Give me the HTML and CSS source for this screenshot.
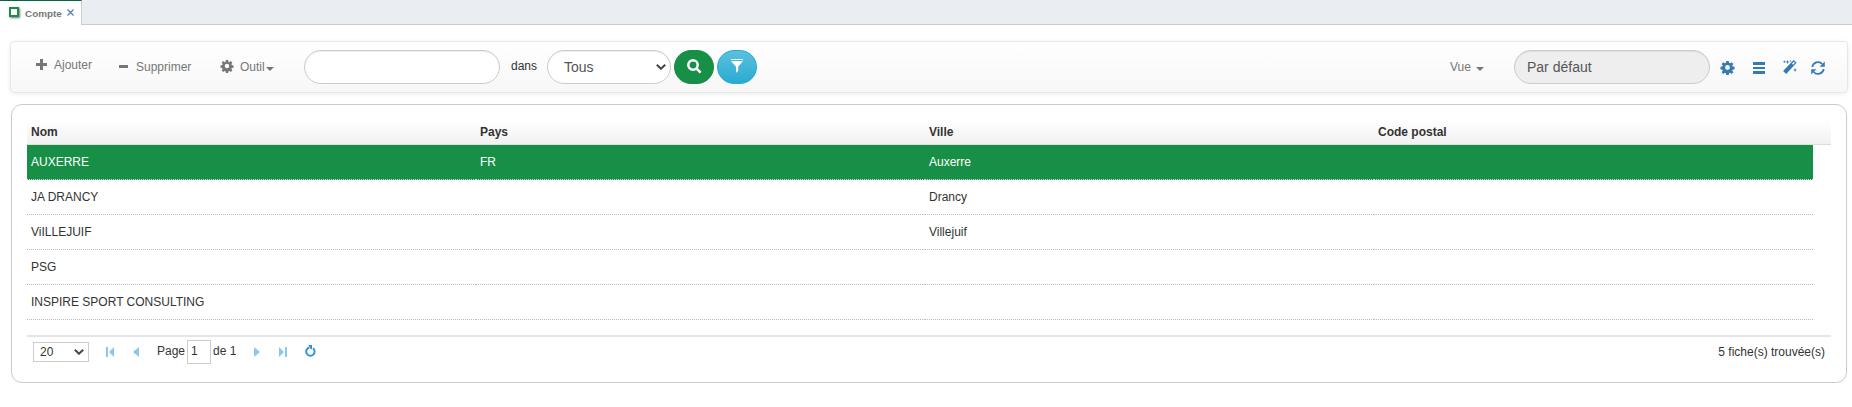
FILE: index.html
```html
<!DOCTYPE html>
<html lang="fr">
<head>
<meta charset="utf-8">
<title>Compte</title>
<link rel="stylesheet" href="styles.css">
</head>
<body>
<svg class="sprite" width="0" height="0">
  <symbol id="cog" viewBox="0 0 14 14"><path fill-rule="evenodd" d="M5.700 0h2.600l.4 2 1.100.5 1.700-1.200 1.800 1.800-1.200 1.700.5 1.100 2 .4v2.600l-2 .4-.5 1.100 1.200 1.700-1.800 1.800-1.700-1.200-1.100.5-.4 2H5.700l-.4-2-1.100-.5-1.700 1.200L.7 12.100l1.200-1.700-.5-1.100-2-.4V6.300l2-.4.5-1.100L.7 3.100l1.800-1.800 1.700 1.200 1.100-.5zM7 4.400a2.600 2.600 0 1 0 0 5.200 2.600 2.600 0 0 0 0-5.200z"/></symbol>
</svg>
<nav class="tabs">
  <div class="tab">
    <span class="tab-icon"></span>
    <span class="tab-label">Compte</span>
    <svg class="tab-close" width="7" height="7" viewBox="0 0 7 7"><path d="M.5.5l6 6M6.500.5l-6 6"/></svg>
  </div>
  <div class="tabs-rest"></div>
</nav>

<header class="toolbar">
  <a class="action action-add">
    <svg width="11" height="11" viewBox="0 0 11 11"><path d="M4 0h3v4h4v3H7v4H4V7H0V4h4z"/></svg>
    <span>Ajouter</span>
  </a>
  <a class="action action-del">
    <svg width="9" height="11" viewBox="0 0 9 11"><path d="M0 4h9v3H0z"/></svg>
    <span>Supprimer</span>
  </a>
  <a class="action action-tool">
    <svg width="12" height="12"><use href="#cog"/></svg>
    <span>Outil</span><i class="caret"></i>
  </a>
  <div class="pill search-input"></div>
  <span class="in-label">dans</span>
  <div class="pill scope"><span>Tous</span>
    <svg width="10" height="6" viewBox="0 0 10 6"><path d="M.8.8L5 4.700 9.200.8"/></svg>
  </div>
  <button class="btn btn-search"><svg width="15" height="15" viewBox="0 0 15 15"><circle cx="6" cy="6" r="4.700"/><path d="M9.600 9.600l4 4"/></svg></button>
  <button class="btn btn-filter"><svg width="12" height="14" viewBox="0 0 12 14"><path d="M0 0h12v1H0zM0 2h12L7.200 7.800V12L5 13.800V7.800z"/></svg></button>
  <a class="action action-view"><span>Vue</span><i class="caret"></i></a>
  <div class="pill view-name">Par défaut</div>
  <div class="links">
    <svg class="l-cog" width="13" height="13"><use href="#cog"/></svg>
    <svg class="l-bars" width="12" height="12" viewBox="0 0 12 12"><path d="M0 0h12v3H0zM0 5h12v2H0zM0 9h12v3H0z"/></svg>
    <svg class="l-magic" width="14" height="14" viewBox="0 0 14 14"><path d="M10.600 0l3 2.800L3.200 14 .1 11.100z"/><path class="hole" d="M9 3.700l1.100 1 1.800-1.900-1.100-1z"/><path d="M4.500 0l.6 1.400 1.500.6-1.500.6-.6 1.500-.6-1.500L2.500 2l1.400-.6zM1.300.3l.5 1 1 .5-1 .4-.5 1-.4-1-.9-.4.900-.5zM12.100 8l.6 1.400 1.300.6-1.300.6-.6 1.400-.6-1.400-1.400-.6 1.400-.6zM7.600 0l.4.700.7.300-.7.400-.4.700-.3-.7-.7-.4.700-.3z"/></svg>
    <svg class="l-sync" width="14" height="14" viewBox="0 0 14 14"><path class="arc" d="M1.200 6A5.900 5.900 0 0 1 11.300 3M12.800 8A5.900 5.900 0 0 1 2.700 11"/><path d="M13.800.5v5.200H8.600zM.2 13.500V8.300h5.200z"/></svg>
  </div>
</header>

<main class="panel">
  <div class="row head"><span>Nom</span><span>Pays</span><span>Ville</span><span>Code postal</span></div>
  <div class="rows">
    <div class="row selected"><span>AUXERRE</span><span>FR</span><span>Auxerre</span><span></span></div>
    <div class="row"><span>JA DRANCY</span><span></span><span>Drancy</span><span></span></div>
    <div class="row"><span>ViILLEJUIF</span><span></span><span>Villejuif</span><span></span></div>
    <div class="row"><span>PSG</span><span></span><span></span><span></span></div>
    <div class="row"><span>INSPIRE SPORT CONSULTING</span><span></span><span></span><span></span></div>
  </div>
  <footer class="pager">
    <div class="size"><span>20</span><svg width="10" height="6" viewBox="0 0 10 6"><path d="M.8.8L5 4.700 9.200.8"/></svg></div>
    <svg class="first" width="8" height="10" viewBox="0 0 8 10"><path d="M0 0h2v10H0zM8 0v10L3 5z"/></svg>
    <svg class="prev" width="6" height="10" viewBox="0 0 6 10"><path d="M6 0v10L0 5z"/></svg>
    <span class="page">Page</span>
    <div class="num">1</div>
    <span class="of">de 1</span>
    <svg class="next" width="6" height="10" viewBox="0 0 6 10"><path d="M0 0v10l6-5z"/></svg>
    <svg class="last" width="8" height="10" viewBox="0 0 8 10"><path d="M6 0h2v10H6zM0 0v10l5-5z"/></svg>
    <svg class="reload" width="11" height="12" viewBox="0 0 11 12"><path class="arc" d="M8 3.300A4.200 4.200 0 1 1 4.500 2.500"/><path d="M3.400 0H7v4.600L5.400 3.400z"/></svg>
    <span class="count">5 fiche(s) trouvée(s)</span>
  </footer>
</main>
</body>
</html>
```
FILE: styles.css
```css
* { box-sizing: border-box; }
body {
  margin: 0;
  background: #fff;
  color: #333;
  font: 12px/14px "Liberation Sans", Arial, sans-serif;
}
svg { display: block; flex: none; }
.sprite { position: absolute; }
symbol { overflow: visible; }

/* tab strip */
.tabs { display: flex; height: 25px; }
.tab {
  display: flex;
  width: 82px;
  padding: 6px 0 0 9px;
  border-top: 1px solid #00693e;
  border-right: 1px solid #ccc;
}
.tab-icon {
  width: 10px;
  height: 10px;
  border: 2px solid #178f46;
  background: #fff;
  box-shadow: 1px 1px 2px #777;
}
.tab-label {
  width: 42px;
  margin-left: 6px;
  color: #777;
  font-size: 9.900px;
  font-weight: bold;
  line-height: 13px;
}
.tab-close { margin-top: 2px; fill: none; stroke: #5580bd; stroke-width: 1.300; }
.tabs-rest { flex: 1; background: #eaeef3; border-bottom: 1px solid #ccc; }

/* toolbar */
.toolbar {
  display: flex;
  align-items: flex-start;
  height: 52px;
  margin: 16px 4px 0 10px;
  padding: 8px 22px 0 25px;
  border: 1px solid #e7e7e7;
  border-radius: 4px;
  background: linear-gradient(#fff, #f7f7f7);
  box-shadow: 0 1px 5px rgba(0, 0, 0, .075);
}
.action { display: flex; color: #777; fill: #777; white-space: nowrap; }
.action-add { width: 83px; margin-top: 8px; }
.action-add svg { margin-top: 1px; }
.action-add span { margin-left: 7px; }
.action-del { width: 102px; margin-top: 10px; }
.action-del svg { margin-top: 1px; }
.action-del span { margin-left: 8px; }
.action-tool { width: 83px; margin-top: 10px; }
.action-tool span { width: 26px; margin-left: 7px; }
.caret {
  width: 8px;
  height: 4px;
  margin-top: 7px;
  border: 4px solid transparent;
  border-top-color: #777;
  border-bottom: 0;
}
.pill {
  height: 34px;
  border: 1px solid #ccc;
  border-radius: 17px;
  background: #fff;
  box-shadow: inset 0 1px 1px rgba(0, 0, 0, .075);
  color: #555;
  font-size: 14px;
  line-height: 32px;
}
.search-input { width: 196px; }
.in-label { width: 36px; margin: 9px 0 0 11px; }
.scope {
  display: flex;
  align-items: center;
  justify-content: space-between;
  width: 124px;
  padding: 0 4px 0 16px;
}
.scope svg, .size svg { fill: none; stroke: #444; stroke-width: 2; }
.btn {
  display: flex;
  justify-content: center;
  width: 40px;
  height: 34px;
  margin: 0 0 0 3px;
  padding: 8px 0 0;
  border: 1px solid #178f46;
  border-radius: 17px;
  background: #178f46;
}
.btn-search svg { fill: none; stroke: #fff; stroke-width: 2.500; }
.btn-filter {
  border-color: #2aabd2;
  background: linear-gradient(#5bc0de, #2aabd2);
  fill: #fff;
}
.action-view { margin: 10px 30px 0 auto; }
.action-view span { width: 26px; }
.view-name { width: 196px; padding-left: 12px; background: #eee; }
.links { display: flex; width: 115px; padding: 10px 0 0 11px; fill: #337ab7; }
.l-cog { margin-top: 1px; }
.l-bars { margin: 2px 0 0 19px; }
.l-magic { margin-left: 18px; }
.l-sync { margin: 1px 0 0 14px; }
.arc { fill: none; stroke: #337ab7; stroke-width: 1.700; }
.hole { fill: #fff; }

/* icons drawn from the shared gear symbol */
.action-tool svg, .l-cog { overflow: visible; }

/* record list */
.panel {
  height: 279px;
  margin: 11px 5px 0 11px;
  padding: 15px 15px 0;
  border: 1px solid #ccc;
  border-radius: 11px;
  box-shadow: 0 2px 2px rgba(0, 0, 0, .03);
}
.row { display: grid; grid-template-columns: repeat(3, 449px) 1fr; }
.row span { padding: 10px 4px 0; border-bottom: 1px dotted #bbb; }
.rows { margin-right: 18px; }
.rows .row { height: 35px; }
.head {
  height: 25px;
  background: linear-gradient(#fff, #f1f1f1);
  border-bottom: 1px solid #ddd;
  font-weight: bold;
}
.row.head span { padding-top: 5px; border: 0; }
.selected { background: #178f46; color: #fff; }
.row.selected span { border-bottom-color: #ddd; }

/* pager */
.pager {
  display: flex;
  align-items: flex-start;
  margin-top: 15px;
  padding: 3px 6px 0;
  border-top: 2px solid #e5e5e5;
  fill: #8ac7f3;
}
.size {
  display: flex;
  align-items: center;
  justify-content: space-between;
  width: 56px;
  height: 20px;
  margin-top: 2px;
  padding: 0 4px 0 6px;
  border: 1px solid #ccc;
}
.pager > svg { margin-top: 7px; }
.pager > .first { margin-left: 17px; }
.pager > .prev { margin-left: 19px; }
.page { width: 30px; margin: 4px 0 0 18px; }
.num { width: 24px; height: 24px; padding: 3px; border: 1px solid #ccc; }
.of { width: 25px; margin: 4px 0 0 2px; white-space: nowrap; }
.pager > .next { margin-left: 16px; }
.pager > .last { margin-left: 19px; }
.pager > .reload { margin: 5px 0 0 18px; fill: #2a8fdc; }
.reload .arc { stroke: #2a8fdc; stroke-width: 1.900; }
.count { margin: 5px 0 0 auto; }
```
